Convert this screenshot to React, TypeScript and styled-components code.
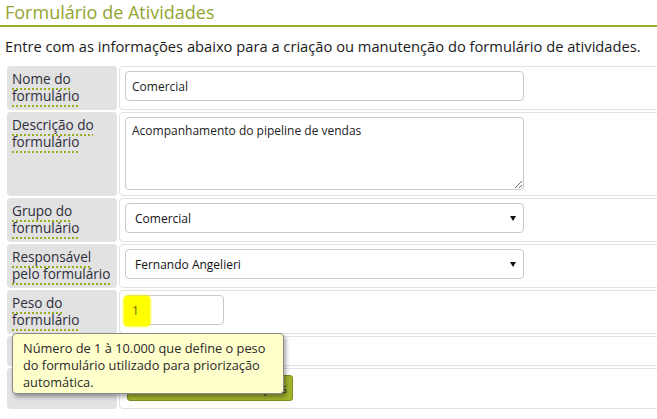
import React from "react";
import styled, { createGlobalStyle } from "styled-components";

const Global = createGlobalStyle`
  html, body { margin: 0; padding: 0; background: #fff; overflow: hidden; }
  body { font-family: "Open Sans", "Noto Sans", sans-serif; color: #222; }
  * { box-sizing: border-box; }
`;

const Page = styled.div`
  width: 657px;
  height: 419px;
  position: relative;
  overflow: hidden;
`;

const Title = styled.h1`
  margin: 0;
  padding: 1px 4px 1px 5px;
  font-weight: 400;
  font-size: 18px;
  line-height: 23px;
  color: #93a430;
  border-bottom: 2px solid #9aad27;
`;

const Intro = styled.p`
  margin: 9px 0 10px 5px;
  font-size: 14.7px;
  line-height: 20px;
  color: #1a1a1a;
  white-space: nowrap;
`;

const FormGrid = styled.div`
  display: grid;
  grid-template-columns: 110px 542px;
  column-gap: 2px;
  row-gap: 2px;
  padding: 0 0 0 7px;
  width: 670px;
`;

const LabelCell = styled.div`
  background: #e2e2e2;
  border-radius: 4px;
  padding: 4px 5px 6px;
  font-size: 13.6px;
  line-height: 17px;
  color: #2e2e3a;
`;

const LabelText = styled.span`
  text-decoration-line: underline;
  text-decoration-style: dotted;
  text-decoration-color: #9aad1f;
  text-decoration-thickness: 2px;
  text-underline-offset: 4px;
`;

const ValueCell = styled.div`
  border: 1px solid #e2e2e2;
  border-radius: 4px;
  padding: 4px 5px 5px;
  position: relative;
  min-width: 0;
`;

const TextInput = styled.input<{ $w: number }>`
  display: block;
  width: ${(p) => p.$w}px;
  height: 30px;
  border: 1px solid #c8c8c8;
  border-radius: 4px;
  padding: 0 6px;
  font-family: "Open Sans", "Noto Sans", sans-serif;
  font-size: 12px;
  color: #222;
  background: #fff;
  outline: none;
`;

const TextArea = styled.textarea`
  display: block;
  width: 399px;
  height: 73px;
  border: 1px solid #c8c8c8;
  border-radius: 4px;
  padding: 5px 6px;
  font-family: "Open Sans", "Noto Sans", sans-serif;
  font-size: 12px;
  line-height: 16px;
  color: #222;
  resize: both;
  outline: none;
`;

const SelectWrap = styled.div`
  position: relative;
  width: 399px;
  &::after {
    content: "";
    position: absolute;
    right: 8px;
    top: 13px;
    border-left: 3px solid transparent;
    border-right: 3px solid transparent;
    border-top: 5px solid #111;
    pointer-events: none;
  }
`;

const Select = styled.select`
  display: block;
  appearance: none;
  -webkit-appearance: none;
  width: 100%;
  height: 30px;
  border: 1px solid #c8c8c8;
  border-radius: 4px;
  padding: 0 9px;
  font-family: "Open Sans", "Noto Sans", sans-serif;
  font-size: 12px;
  color: #111;
  background: #fff;
  outline: none;
`;

const Highlight = styled.span`
  position: absolute;
  left: 4px;
  top: 5px;
  width: 26px;
  height: 30px;
  background: #ffff00;
  border-radius: 4px;
  box-shadow: 0 0 2px 1px rgba(255, 255, 0, 0.8);
  pointer-events: none;
  font-size: 12px;
  color: #6d6d10;
  padding: 6px 0 0 8px;
`;

const Check = styled.input`
  display: block;
  margin: 5px 0 1px 3px;
  width: 13px;
  height: 13px;
`;

const Button = styled.button`
  display: block;
  margin: 2px 2px 2px;
  height: 26px;
  padding: 0 5px 0 12px;
  background: #a2b32c;
  border: 1px solid #7e8c1f;
  border-radius: 3px;
  font-family: "Open Sans", "Noto Sans", sans-serif;
  font-size: 12px;
  color: #333;
  width: 166px;
  text-align: right;
`;

const Tooltip = styled.div`
  position: absolute;
  left: 12px;
  top: 333px;
  width: 272px;
  height: 61px;
  background: #ffffcc;
  border: 1px solid #8a8a8a;
  border-radius: 4px;
  box-shadow: 2px 3px 4px rgba(0, 0, 0, 0.35);
  padding: 6px 8px 6px 10px;
  font-size: 12.8px;
  line-height: 17px;
  color: #2a2a2a;
`;

type Row = { label: string; content: React.ReactNode };

const rows: Row[] = [
  {
    label: "Nome do formulário",
    content: <TextInput $w={399} defaultValue="Comercial" />,
  },
  {
    label: "Descrição do formulário",
    content: <TextArea defaultValue="Acompanhamento do pipeline de vendas" />,
  },
  {
    label: "Grupo do formulário",
    content: (
      <SelectWrap>
        <Select defaultValue="Comercial">
          <option>Comercial</option>
        </Select>
      </SelectWrap>
    ),
  },
  {
    label: "Responsável pelo formulário",
    content: (
      <SelectWrap>
        <Select defaultValue="Fernando Angelieri">
          <option>Fernando Angelieri</option>
        </Select>
      </SelectWrap>
    ),
  },
  {
    label: "Peso do formulário",
    content: (
      <>
        <TextInput $w={99} defaultValue="" />
        <Highlight>1</Highlight>
      </>
    ),
  },
  {
    label: "",
    content: <Check type="checkbox" defaultChecked />,
  },
  {
    label: "",
    content: <Button>Salvar informações</Button>,
  },
];

export default function App() {
  return (
    <Page>
      <Global />
      <Title>Formulário de Atividades</Title>
      <Intro>
        Entre com as informações abaixo para a criação ou manutenção do formulário de atividades.
      </Intro>
      <FormGrid>
        {rows.map((r, i) => (
          <React.Fragment key={i}>
            <LabelCell>{r.label && <LabelText>{r.label}</LabelText>}</LabelCell>
            <ValueCell>{r.content}</ValueCell>
          </React.Fragment>
        ))}
      </FormGrid>
      <Tooltip>
        Número de 1 à 10.000 que define o peso do formulário utilizado para priorização automática.
      </Tooltip>
    </Page>
  );
}
